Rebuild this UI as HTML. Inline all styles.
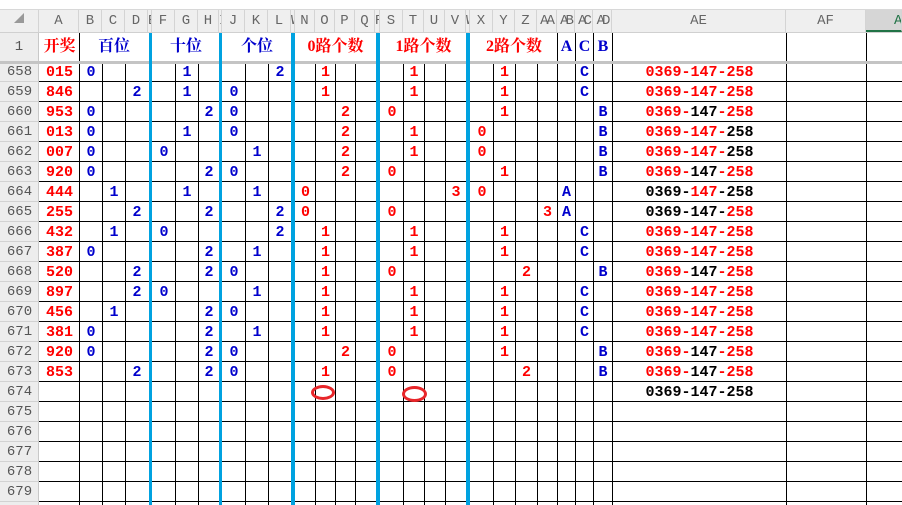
<!DOCTYPE html>
<html><head><meta charset="utf-8"><style>
*{margin:0;padding:0;box-sizing:border-box}
body{width:902px;height:505px;overflow:hidden;background:#fff;position:relative;font-family:"Liberation Mono","Noto Sans CJK SC",monospace}
div{position:absolute}
.hd{top:10px;height:23px;background:#efefef;border-bottom:1px solid #d0d0d0}
.hl{top:10px;height:22px;line-height:22px;text-align:center;color:#666;font-size:14px;border-right:1px solid #d4d4d4;overflow:hidden;white-space:nowrap}
.rh{left:0;width:39px;background:#ededed;border-right:1px solid #c8c8c8;color:#555;font-size:14px;text-align:center}
.v{top:61px;height:444px;width:1px;background:#000}
.v1{top:33px;height:29px;width:1px;background:#000}
.bl{top:33px;height:472px;background:#00a2e0}
.row{left:0;width:902px;height:20px}
.row div{top:0;height:20px;line-height:21px;text-align:center;font-weight:bold;font-size:15px}
.r{color:#f00}.b{color:#0000cc}.k{color:#000}
.A{left:40px;width:39px}.B{left:80px;width:22px}.C{left:103px;width:22px}.D{left:126px;width:22px}
.F{left:153px;width:22px}.G{left:176px;width:22px}.H{left:199px;width:20px}
.J{left:223px;width:22px}.K{left:246px;width:22px}.L{left:269px;width:22px}
.N{left:296px;width:19px}.O{left:316px;width:19px}.P{left:336px;width:19px}.Q{left:356px;width:19px}
.S{left:381px;width:22px}.T{left:404px;width:20px}.U{left:425px;width:20px}.V{left:446px;width:20px}
.X{left:471px;width:22px}.Y{left:494px;width:21px}.Z{left:516px;width:21px}.AA{left:538px;width:19px}
.AB{left:558px;width:17px}.AC{left:576px;width:17px}.AD{left:594px;width:18px}.AE{left:613px;width:173px}
.row .AE span{font-weight:bold}
.h1{top:33px;height:28px;line-height:28px;text-align:center;font-weight:bold;font-size:16px;font-family:"Liberation Serif","Noto Serif CJK SC",serif}
</style></head><body>
<div style="left:0;top:0;width:902px;height:10px;background:#fff;border-bottom:1px solid #d8d8d8"></div>
<div class="hd" style="left:0;width:902px"></div>
<div class="hl" style="left:0;width:39px;color:#999;font-size:10px">◢</div>
<div class="hl" style="left:39px;width:40px">A</div>
<div class="hl" style="left:79px;width:23px">B</div>
<div class="hl" style="left:102px;width:23px">C</div>
<div class="hl" style="left:125px;width:23px">D</div>
<div class="hl" style="left:148px;width:4px">E</div>
<div class="hl" style="left:152px;width:23px">F</div>
<div class="hl" style="left:175px;width:23px">G</div>
<div class="hl" style="left:198px;width:21px">H</div>
<div class="hl" style="left:219px;width:3px">I</div>
<div class="hl" style="left:222px;width:23px">J</div>
<div class="hl" style="left:245px;width:23px">K</div>
<div class="hl" style="left:268px;width:23px">L</div>
<div class="hl" style="left:291px;width:4px">W</div>
<div class="hl" style="left:295px;width:20px">N</div>
<div class="hl" style="left:315px;width:20px">O</div>
<div class="hl" style="left:335px;width:20px">P</div>
<div class="hl" style="left:355px;width:20px">Q</div>
<div class="hl" style="left:375px;width:5px">R</div>
<div class="hl" style="left:380px;width:23px">S</div>
<div class="hl" style="left:403px;width:21px">T</div>
<div class="hl" style="left:424px;width:21px">U</div>
<div class="hl" style="left:445px;width:21px">V</div>
<div class="hl" style="left:466px;width:4px">W</div>
<div class="hl" style="left:470px;width:23px">X</div>
<div class="hl" style="left:493px;width:22px">Y</div>
<div class="hl" style="left:515px;width:22px">Z</div>
<div class="hl" style="left:537px;width:20px;letter-spacing:-2px">AA</div>
<div class="hl" style="left:557px;width:18px;letter-spacing:-3px">AB</div>
<div class="hl" style="left:575px;width:18px;letter-spacing:-3px">AC</div>
<div class="hl" style="left:593px;width:19px;letter-spacing:-3px">AD</div>
<div class="hl" style="left:612px;width:174px">AE</div>
<div class="hl" style="left:786px;width:80px">AF</div>
<div class="hl" style="left:866px;width:36px;background:#d6d6d6;color:#217346;border-bottom:2px solid #217346;text-align:left;padding-left:28px">AG</div>

<div class="rh" style="top:33px;height:28px;line-height:28px">1</div>
<div style="left:0;top:61px;width:902px;height:3px;background:#c4c4c4"></div>
<div class="rh" style="top:64px;height:441px;background:repeating-linear-gradient(to bottom,#ededed 0 17px,#d2d2d2 17px 18px,#ededed 18px 20px)"></div>
<div style="left:0;top:62px;width:39px;font-size:14px;color:#555;text-align:center;line-height:20px">658<br>659<br>660<br>661<br>662<br>663<br>664<br>665<br>666<br>667<br>668<br>669<br>670<br>671<br>672<br>673<br>674<br>675<br>676<br>677<br>678<br>679</div>

<div style="left:39px;top:62px;width:863px;height:443px;background:repeating-linear-gradient(to bottom,transparent 0 19px,#000 19px 20px)"></div>

<div class="v1" style="left:79px"></div><div class="v1" style="left:557px"></div><div class="v1" style="left:575px"></div><div class="v1" style="left:593px"></div><div class="v1" style="left:612px"></div><div class="v1" style="left:786px"></div><div class="v1" style="left:866px"></div>
<div class="v" style="left:79px"></div><div class="v" style="left:102px"></div><div class="v" style="left:125px"></div>
<div class="v" style="left:175px"></div><div class="v" style="left:198px"></div>
<div class="v" style="left:245px"></div><div class="v" style="left:268px"></div>
<div class="v" style="left:315px"></div><div class="v" style="left:335px"></div><div class="v" style="left:355px"></div>
<div class="v" style="left:403px"></div><div class="v" style="left:424px"></div><div class="v" style="left:445px"></div>
<div class="v" style="left:493px"></div><div class="v" style="left:515px"></div><div class="v" style="left:537px"></div><div class="v" style="left:557px"></div><div class="v" style="left:575px"></div><div class="v" style="left:593px"></div><div class="v" style="left:612px"></div><div class="v" style="left:786px"></div><div class="v" style="left:866px"></div>
<div style="left:0;top:61px;width:902px;height:3px;background:#c4c4c4"></div>
<div class="bl" style="left:149px;width:3px"></div>
<div class="bl" style="left:219px;width:3px"></div>
<div class="bl" style="left:291px;width:4px"></div>
<div class="bl" style="left:376px;width:4px"></div>
<div class="bl" style="left:466px;width:4px"></div>

<div class="h1 r" style="left:40px;width:39px">开奖</div>
<div class="h1 b" style="left:80px;width:68px">百位</div>
<div class="h1 b" style="left:153px;width:66px">十位</div>
<div class="h1 b" style="left:223px;width:68px">个位</div>
<div class="h1 r" style="left:296px;width:79px">0路个数</div>
<div class="h1 r" style="left:381px;width:85px">1路个数</div>
<div class="h1 r" style="left:471px;width:86px">2路个数</div>
<div class="h1 b AB">A</div><div class="h1 b AC">C</div><div class="h1 b AD">B</div>

<div class="row" style="top:62px"><div class="A r">015</div><div class="B b">0</div><div class="G b">1</div><div class="L b">2</div><div class="O r">1</div><div class="T r">1</div><div class="Y r">1</div><div class="AC b">C</div><div class="AE r">0369-147-258</div></div>
<div class="row" style="top:82px"><div class="A r">846</div><div class="D b">2</div><div class="G b">1</div><div class="J b">0</div><div class="O r">1</div><div class="T r">1</div><div class="Y r">1</div><div class="AC b">C</div><div class="AE r">0369-147-258</div></div>
<div class="row" style="top:102px"><div class="A r">953</div><div class="B b">0</div><div class="H b">2</div><div class="J b">0</div><div class="P r">2</div><div class="S r">0</div><div class="Y r">1</div><div class="AD b">B</div><div class="AE r">0369-<span class="k">147</span>-258</div></div>
<div class="row" style="top:122px"><div class="A r">013</div><div class="B b">0</div><div class="G b">1</div><div class="J b">0</div><div class="P r">2</div><div class="T r">1</div><div class="X r">0</div><div class="AD b">B</div><div class="AE r">0369-147-<span class="k">258</span></div></div>
<div class="row" style="top:142px"><div class="A r">007</div><div class="B b">0</div><div class="F b">0</div><div class="K b">1</div><div class="P r">2</div><div class="T r">1</div><div class="X r">0</div><div class="AD b">B</div><div class="AE r">0369-147-<span class="k">258</span></div></div>
<div class="row" style="top:162px"><div class="A r">920</div><div class="B b">0</div><div class="H b">2</div><div class="J b">0</div><div class="P r">2</div><div class="S r">0</div><div class="Y r">1</div><div class="AD b">B</div><div class="AE r">0369-<span class="k">147</span>-258</div></div>
<div class="row" style="top:182px"><div class="A r">444</div><div class="C b">1</div><div class="G b">1</div><div class="K b">1</div><div class="N r">0</div><div class="V r">3</div><div class="X r">0</div><div class="AB b">A</div><div class="AE k">0369-<span class="r">147</span>-258</div></div>
<div class="row" style="top:202px"><div class="A r">255</div><div class="D b">2</div><div class="H b">2</div><div class="L b">2</div><div class="N r">0</div><div class="S r">0</div><div class="AA r">3</div><div class="AB b">A</div><div class="AE k">0369-147-<span class="r">258</span></div></div>
<div class="row" style="top:222px"><div class="A r">432</div><div class="C b">1</div><div class="F b">0</div><div class="L b">2</div><div class="O r">1</div><div class="T r">1</div><div class="Y r">1</div><div class="AC b">C</div><div class="AE r">0369-147-258</div></div>
<div class="row" style="top:242px"><div class="A r">387</div><div class="B b">0</div><div class="H b">2</div><div class="K b">1</div><div class="O r">1</div><div class="T r">1</div><div class="Y r">1</div><div class="AC b">C</div><div class="AE r">0369-147-258</div></div>
<div class="row" style="top:262px"><div class="A r">520</div><div class="D b">2</div><div class="H b">2</div><div class="J b">0</div><div class="O r">1</div><div class="S r">0</div><div class="Z r">2</div><div class="AD b">B</div><div class="AE r">0369-<span class="k">147</span>-258</div></div>
<div class="row" style="top:282px"><div class="A r">897</div><div class="D b">2</div><div class="F b">0</div><div class="K b">1</div><div class="O r">1</div><div class="T r">1</div><div class="Y r">1</div><div class="AC b">C</div><div class="AE r">0369-147-258</div></div>
<div class="row" style="top:302px"><div class="A r">456</div><div class="C b">1</div><div class="H b">2</div><div class="J b">0</div><div class="O r">1</div><div class="T r">1</div><div class="Y r">1</div><div class="AC b">C</div><div class="AE r">0369-147-258</div></div>
<div class="row" style="top:322px"><div class="A r">381</div><div class="B b">0</div><div class="H b">2</div><div class="K b">1</div><div class="O r">1</div><div class="T r">1</div><div class="Y r">1</div><div class="AC b">C</div><div class="AE r">0369-147-258</div></div>
<div class="row" style="top:342px"><div class="A r">920</div><div class="B b">0</div><div class="H b">2</div><div class="J b">0</div><div class="P r">2</div><div class="S r">0</div><div class="Y r">1</div><div class="AD b">B</div><div class="AE r">0369-<span class="k">147</span>-258</div></div>
<div class="row" style="top:362px"><div class="A r">853</div><div class="D b">2</div><div class="H b">2</div><div class="J b">0</div><div class="O r">1</div><div class="S r">0</div><div class="Z r">2</div><div class="AD b">B</div><div class="AE r">0369-<span class="k">147</span>-258</div></div>
<div class="row" style="top:382px"><div class="AE k">0369-147-258</div></div>

<div style="left:311px;top:385px;width:24px;height:15px;border:3px solid #e8262a;border-radius:50%"></div>
<div style="left:402px;top:386px;width:25px;height:16px;border:3px solid #e8262a;border-radius:50%"></div>
</body></html>
